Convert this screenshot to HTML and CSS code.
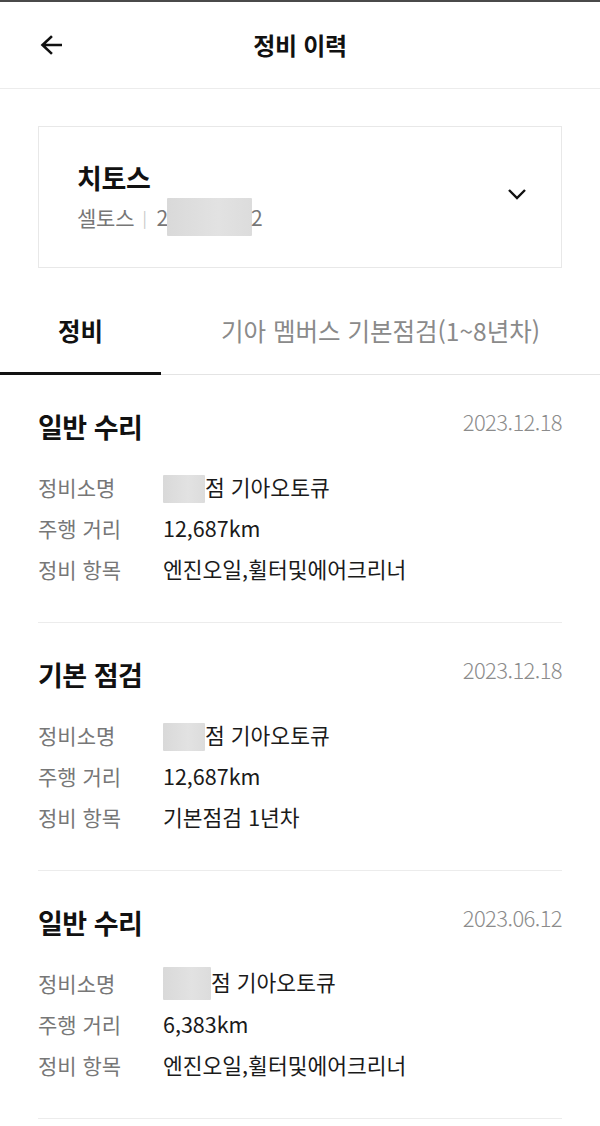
FILE: index.html
```html
<!DOCTYPE html>
<html lang="ko">
<head>
<meta charset="utf-8">
<title>정비 이력</title>
<link rel="stylesheet" href="styles.css">
</head>
<body>
<div class="page">
  <header class="header">
    <svg class="back" width="22" height="20" viewBox="0 0 22 20"><path d="M21 10H3M11 2L2.5 10L11 18" fill="none" stroke="#111" stroke-width="2.6" stroke-linecap="square"/></svg>
    <h1 class="title">정비 이력</h1>
  </header>

  <div class="card-wrap">
    <div class="card">
      <div class="car-info">
        <div class="car-name">치토스</div>
        <div class="car-sub"><span>셀토스</span><span class="sep">|</span><span class="num">2</span><span class="mask mask-plate"></span><span class="num">2</span></div>
      </div>
      <svg class="chev" width="20" height="12" viewBox="0 0 20 12"><path d="M2 2L10 10L18 2" fill="none" stroke="#111" stroke-width="2.4"/></svg>
    </div>
  </div>

  <nav class="tabs">
    <div class="tab active">정비</div>
    <div class="tab tab-wide">기아 멤버스 기본점검(1~8년차)</div>
  </nav>

  <section class="record">
    <div class="rec-head"><h2 class="rec-title">일반 수리</h2><span class="rec-date">2023.12.18</span></div>
    <dl class="rows">
      <dt>정비소명</dt><dd><span class="mask mask-shop"></span>점 기아오토큐</dd>
      <dt>주행 거리</dt><dd>12,687km</dd>
      <dt>정비 항목</dt><dd>엔진오일,휠터및에어크리너</dd>
    </dl>
  </section>

  <section class="record">
    <div class="rec-head"><h2 class="rec-title">기본 점검</h2><span class="rec-date">2023.12.18</span></div>
    <dl class="rows">
      <dt>정비소명</dt><dd><span class="mask mask-shop"></span>점 기아오토큐</dd>
      <dt>주행 거리</dt><dd>12,687km</dd>
      <dt>정비 항목</dt><dd>기본점검 1년차</dd>
    </dl>
  </section>

  <section class="record">
    <div class="rec-head"><h2 class="rec-title">일반 수리</h2><span class="rec-date">2023.06.12</span></div>
    <dl class="rows">
      <dt>정비소명</dt><dd><span class="mask mask-shop mask-tall"></span>점 기아오토큐</dd>
      <dt>주행 거리</dt><dd>6,383km</dd>
      <dt>정비 항목</dt><dd>엔진오일,휠터및에어크리너</dd>
    </dl>
  </section>
</div>
</body>
</html>
```

FILE: styles.css
```css
* { box-sizing: border-box; }
html, body { margin: 0; padding: 0; background: #fff; }
body {
  font-family: "Noto Sans CJK KR", "Noto Sans", sans-serif;
  color: #111;
  width: 600px;
}
.page { border-top: 2px solid #4a4a4a; }

.header {
  height: 87px;
  border-bottom: 1px solid #ececec;
  display: flex;
  align-items: center;
  justify-content: center;
  position: relative;
}
.back { position: absolute; left: 40px; top: 33px; }
.title {
  margin: 0;
  font-size: 24px;
  font-weight: 700;
  letter-spacing: -0.3px;
  line-height: 1;
  color: #111;
}

.card-wrap { padding: 37px 38px 0; }
.card {
  height: 142px;
  border: 1px solid #e8e8e8;
  display: flex;
  align-items: center;
  justify-content: space-between;
  padding: 0 34px 0 38px;
}
.car-info { display: flex; flex-direction: column; gap: 4px; padding-top: 4px; }
.car-name { font-size: 27px; font-weight: 700; line-height: 32px; letter-spacing: -0.4px; color: #111; }
.car-sub {
  display: flex; align-items: center;
  font-size: 21px; line-height: 32px; color: #777; letter-spacing: -0.2px;
}
.sep { color: #c8c8c8; font-size: 16px; margin: 0 10px 0 8px; }
.num { color: #777; }
.chev { margin-top: -6px; }

.mask {
  display: inline-block;
  background: linear-gradient(90deg, #d9d9d9, #e2e2e2 60%, #dcdcdc);
  border-radius: 1px;
}
.mask-plate { width: 85px; height: 38px; margin: 0 -1px; }
.mask-shop { width: 42px; height: 28px; vertical-align: -7px; margin-right: 0; }
.mask-tall { width: 48px; height: 33px; vertical-align: -9px; }

.tabs {
  margin-top: 24px;
  display: flex;
  border-bottom: 1px solid #e4e4e4;
}
.tab {
  height: 83px;
  display: flex;
  align-items: center;
  justify-content: center;
  padding-bottom: 4px;
  font-size: 24.5px;
  letter-spacing: 0;
  color: #8a8a8a;
  border-bottom: 3px solid transparent;
  margin-bottom: -1px;
}
.tab.active { width: 161px; color: #111; font-weight: 700; border-bottom-color: #111; }
.tab-wide { flex: 1; }

.record {
  margin: 0 38px;
  height: 248px;
  border-bottom: 1px solid #ececec;
  padding-top: 36px;
}
.rec-head { display: flex; justify-content: space-between; align-items: flex-start; height: 32px; }
.rec-title { margin: 0; font-size: 27px; font-weight: 700; line-height: 32px; letter-spacing: -0.5px; color: #111; }
.rec-date { font-size: 22px; font-weight: 300; line-height: 26px; color: #8c8c8c; letter-spacing: -0.6px; margin-top: -3px; }

.rows {
  margin: 23px 0 0;
  display: grid;
  grid-template-columns: 125px 1fr;
  grid-auto-rows: 41px;
  align-items: center;
}
.rows dt { font-size: 21px; color: #777; letter-spacing: 0; }
.rows dd { margin: 0; font-size: 21.5px; color: #1a1a1a; letter-spacing: 0; white-space: nowrap; }
```
